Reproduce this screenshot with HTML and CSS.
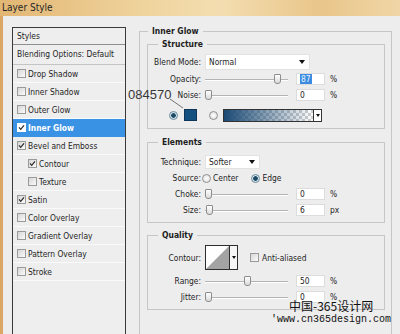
FILE: index.html
```html
<!DOCTYPE html>
<html lang="en">
<head>
    <meta charset="UTF-8">
    <title>Layer Style</title>
    <link rel="stylesheet" href="styles.css">
</head>
<body>

<div class="titlebar">Layer Style</div>

<div class="dialog">
    <!-- left list of styles -->
    <div class="styles-list">
        <div class="list-head">Styles</div>
        <div class="list-blend">Blending Options: Default</div>
        <div class="item"><span class="cb"></span>Drop Shadow</div>
        <div class="item"><span class="cb"></span>Inner Shadow</div>
        <div class="item"><span class="cb"></span>Outer Glow</div>
        <div class="item active"><span class="cb on"><svg viewBox="0 0 7 7"><path d="M1 3.4L2.7 5.4L6 1.3"/></svg></span>Inner Glow</div>
        <div class="item"><span class="cb on"><svg viewBox="0 0 7 7"><path d="M1 3.4L2.7 5.4L6 1.3"/></svg></span>Bevel and Emboss</div>
        <div class="item sub-item"><span class="cb on"><svg viewBox="0 0 7 7"><path d="M1 3.4L2.7 5.4L6 1.3"/></svg></span>Contour</div>
        <div class="item sub-item"><span class="cb"></span>Texture</div>
        <div class="item"><span class="cb on"><svg viewBox="0 0 7 7"><path d="M1 3.4L2.7 5.4L6 1.3"/></svg></span>Satin</div>
        <div class="item"><span class="cb"></span>Color Overlay</div>
        <div class="item"><span class="cb"></span>Gradient Overlay</div>
        <div class="item"><span class="cb"></span>Pattern Overlay</div>
        <div class="item"><span class="cb"></span>Stroke</div>
    </div>

    <!-- settings -->
    <fieldset class="group outer">
        <legend>Inner Glow</legend>

        <fieldset class="group sub structure">
            <legend>Structure</legend>
            <div class="row blend-row">
                <span class="lbl">Blend Mode:</span>
                <div class="select blend-select">Normal<span class="arrow"></span></div>
            </div>
            <div class="row">
                <span class="lbl">Opacity:</span>
                <div class="slider"><span class="thumb" style="left:69px"></span></div>
                <div class="num"><span class="sel">87</span></div>
                <span class="unit">%</span>
            </div>
            <div class="row">
                <span class="lbl">Noise:</span>
                <div class="slider"><span class="thumb" style="left:0px"></span></div>
                <div class="num">0</div>
                <span class="unit">%</span>
            </div>
            <div class="row color-row">
                <span class="radio on"></span>
                <span class="swatch"></span>
                <span class="radio second"></span>
                <div class="gradient"><span class="grad-fill"></span><span class="grad-arrow"><span class="arrow"></span></span></div>
            </div>
        </fieldset>

        <fieldset class="group sub elements">
            <legend>Elements</legend>
            <div class="row">
                <span class="lbl">Technique:</span>
                <div class="select tech-select">Softer<span class="arrow"></span></div>
            </div>
            <div class="row">
                <span class="lbl">Source:</span>
                <span class="radio src-center"></span><span class="opt">Center</span>
                <span class="radio on src-edge"></span><span class="opt">Edge</span>
            </div>
            <div class="row">
                <span class="lbl">Choke:</span>
                <div class="slider"><span class="thumb" style="left:0px"></span></div>
                <div class="num">0</div>
                <span class="unit">%</span>
            </div>
            <div class="row">
                <span class="lbl">Size:</span>
                <div class="slider"><span class="thumb" style="left:1px"></span></div>
                <div class="num">6</div>
                <span class="unit">px</span>
            </div>
        </fieldset>

        <fieldset class="group sub quality">
            <legend>Quality</legend>
            <div class="row contour-row">
                <span class="lbl">Contour:</span>
                <div class="contour">
                    <svg class="curve" viewBox="0 0 24 23" preserveAspectRatio="none"><polygon points="0,23 24,0 24,23"/></svg>
                    <span class="contour-arrow"><span class="arrow"></span></span>
                </div>
                <span class="cb aa"></span><span class="opt aa-text">Anti-aliased</span>
            </div>
            <div class="row range-row">
                <span class="lbl">Range:</span>
                <div class="slider"><span class="thumb" style="left:39px"></span></div>
                <div class="num">50</div>
                <span class="unit">%</span>
            </div>
            <div class="row">
                <span class="lbl">Jitter:</span>
                <div class="slider"><span class="thumb" style="left:0px"></span></div>
                <div class="num">0</div>
                <span class="unit">%</span>
            </div>
        </fieldset>
    </fieldset>
</div>

<!-- annotation over the color swatch -->
<div class="note">084570</div>
<svg class="note-line" width="20" height="14" viewBox="0 0 20 14"><path d="M1 1L14 10"/></svg>

<!-- watermark -->
<div class="watermark">
    <div class="wm-cn">中国-365设计网</div>
    <div class="wm-url">'www.cn365design.com</div>
</div>

</body>
</html>
```

FILE: styles.css
```css
* {
    box-sizing: border-box;
}

body {
    margin: 0;
    width: 400px;
    height: 334px;
    overflow: hidden;
    position: relative;
    background: #ededed;
    font-family: "DejaVu Sans Condensed", "DejaVu Sans", sans-serif;
    font-size: 8.4px;
    color: #1e1e1e;
}

.titlebar {
    height: 16px;
    padding: 2px 0 0 2px;
    font-size: 10px;
    line-height: 12px;
    color: #262626;
    background: linear-gradient(90deg, #e2b673, #efd39c 35%, #f3ddb0 55%, #e9c68a 80%, #f0d6a6);
}

.dialog {
    display: flex;
    align-items: flex-start;
    height: 318px;
    padding: 11px 0 0 9px;
    border-left: 3px solid #dca664;
}

/* left list */
.styles-list {
    flex: none;
    width: 114px;
    height: 320px;
    border: 1px solid #3a3a3a;
    border-bottom: none;
    background: #eeeeee;
}

.list-head {
    height: 17px;
    line-height: 16px;
    padding-left: 4px;
    border-bottom: 1px solid #8e8e8e;
}

.list-blend {
    height: 20px;
    line-height: 19px;
    padding-left: 4px;
    border-bottom: 1px solid #c4c4c4;
}

.item {
    display: flex;
    align-items: center;
    height: 18px;
    padding-left: 4px;
    border-bottom: 1px solid #fafafa;
}

.item.sub-item {
    padding-left: 15px;
}

.item.active {
    background: #3a92e4;
    color: #fff;
    font-weight: bold;
    border-bottom-color: #3a92e4;
}

.cb {
    flex: none;
    width: 9px;
    height: 9px;
    margin-right: 2px;
    border: 1px solid #9a9a9a;
    background: linear-gradient(135deg, #d6d6d6, #fbfbfb);
    display: flex;
}

.cb svg {
    width: 7px;
    height: 7px;
    fill: none;
    stroke: #2a2a2a;
    stroke-width: 1.2;
}

.item.active .cb {
    background: #fff;
    border-color: #fff;
}

/* fieldsets */
.group {
    margin: 0;
    border: 1px solid #c6c6c6;
}

.group legend {
    padding: 0 4px;
    font-weight: bold;
    font-size: 8.5px;
    line-height: 11px;
}

.outer {
    flex: none;
    width: 253px;
    height: 330px;
    margin-left: 13px;
    margin-top: -1px;
    padding: 2px 6px 0 7px;
}

.outer > legend {
    margin-left: 1px;
}

.sub {
    padding: 4px 0 6px 4px;
}

.sub > legend {
    margin-left: 6px;
}

.elements {
    margin-top: 8px;
    padding-top: 7px;
    padding-bottom: 5px;
}

.quality {
    margin-top: 7px;
    padding-top: 4px;
    padding-bottom: 5px;
}

.row {
    display: flex;
    align-items: center;
    height: 14px;
    margin-top: 2px;
    white-space: nowrap;
}

.blend-row {
    height: 16px;
    margin-top: 0;
}

.elements .row:first-of-type {
    margin-top: 0;
}

.lbl {
    flex: none;
    display: flex;
    justify-content: flex-end;
    width: 49px;
    margin-right: 4px;
}

.select {
    display: flex;
    align-items: center;
    justify-content: space-between;
    height: 100%;
    padding: 0 4px 0 3px;
    background: #fff;
    border: 1px solid #e2e2e2;
}

.blend-select {
    width: 105px;
}

.tech-select {
    width: 55px;
}

.arrow {
    width: 0;
    height: 0;
    border-left: 3px solid transparent;
    border-right: 3px solid transparent;
    border-top: 4px solid #111;
}

.slider {
    flex: none;
    position: relative;
    width: 83px;
    height: 14px;
}

.slider::before {
    content: "";
    position: absolute;
    left: 0;
    right: 0;
    top: 7px;
    height: 1px;
    background: #b4b4b4;
    box-shadow: 0 1px 0 #fff;
}

.thumb {
    position: absolute;
    top: 2px;
    width: 7px;
    height: 10px;
    border: 1px solid #8c8c8c;
    border-radius: 1px 1px 3px 3px;
    background: linear-gradient(#ffffff, #dadada);
}

.num {
    flex: none;
    width: 29px;
    height: 12px;
    margin-left: 8px;
    padding-left: 3px;
    line-height: 10px;
    background: #fff;
    border: 1px solid #dcdcdc;
}

.sel {
    background: #3b8ce0;
    color: #eaf3ff;
    padding: 0 1px;
}

.unit {
    margin-left: 5px;
}

/* color row */
.color-row {
    margin-top: 6px;
    padding-left: 17px;
}

.radio {
    flex: none;
    width: 9px;
    height: 9px;
    border-radius: 50%;
    border: 1px solid #8f8f8f;
    background: radial-gradient(circle, #ffffff, #d9d9d9);
}

.radio.on {
    border-color: #6f8a99;
    background: radial-gradient(circle, #1d4a64 0 2px, #cfe3ec 2.6px);
}

.swatch {
    flex: none;
    width: 13px;
    height: 12px;
    margin-left: 6px;
    background: #14507f;
    border: 1px solid #0c3558;
}

.radio.second {
    margin-left: 12px;
}

.gradient {
    flex: none;
    display: flex;
    width: 99px;
    height: 13px;
    margin-left: 5px;
    border: 1px solid #333;
    background-color: #fff;
    background-image: repeating-conic-gradient(#cfcfcf 0 25%, #ffffff 0 50%);
    background-size: 6px 6px;
}

.grad-fill {
    flex: 1;
    background: linear-gradient(90deg, #1b4a75, rgba(27, 74, 117, 0));
}

.grad-arrow {
    flex: none;
    width: 8px;
    display: flex;
    align-items: center;
    justify-content: center;
    background: #fff;
    border-left: 1px solid #333;
}

.grad-arrow .arrow,
.contour-arrow .arrow {
    border-left-width: 2px;
    border-right-width: 2px;
    border-top-width: 3px;
}

/* source radios */
.src-center {
    margin-left: -3px;
}

.opt {
    margin-left: 2px;
}

.src-edge {
    margin-left: 13px;
}

/* quality */
.contour-row {
    height: 25px;
    margin-top: 0;
}

.contour {
    flex: none;
    display: flex;
    width: 33px;
    height: 25px;
    border: 1px solid #2e2e2e;
    background: #fff;
}

.curve {
    flex: 1;
    height: 100%;
    fill: #a3a3a3;
}

.contour-arrow {
    flex: none;
    width: 8px;
    display: flex;
    align-items: center;
    justify-content: center;
    border-left: 1px solid #2e2e2e;
    background: #f6f6f6;
}

.cb.aa {
    margin-left: 12px;
    margin-right: 0;
}

.aa-text {
    margin-left: 3px;
}

.range-row {
    margin-top: 4px;
}

/* overlays */
.note {
    position: absolute;
    left: 128px;
    top: 87px;
    font-family: "Liberation Sans", Arial, sans-serif;
    font-size: 13px;
    color: #383838;
}

.note-line {
    position: absolute;
    left: 169px;
    top: 98px;
}

.note-line path {
    stroke: #555;
    stroke-width: 0.8;
    fill: none;
}

.watermark {
    position: absolute;
    left: 271px;
    top: 298px;
    color: #111;
}

.wm-cn {
    margin-left: 18px;
    font-family: "Noto Sans CJK SC", sans-serif;
    font-size: 12px;
    line-height: 16px;
}

.wm-url {
    font-family: "Liberation Mono", monospace;
    font-size: 10px;
    line-height: 12px;
}
```
